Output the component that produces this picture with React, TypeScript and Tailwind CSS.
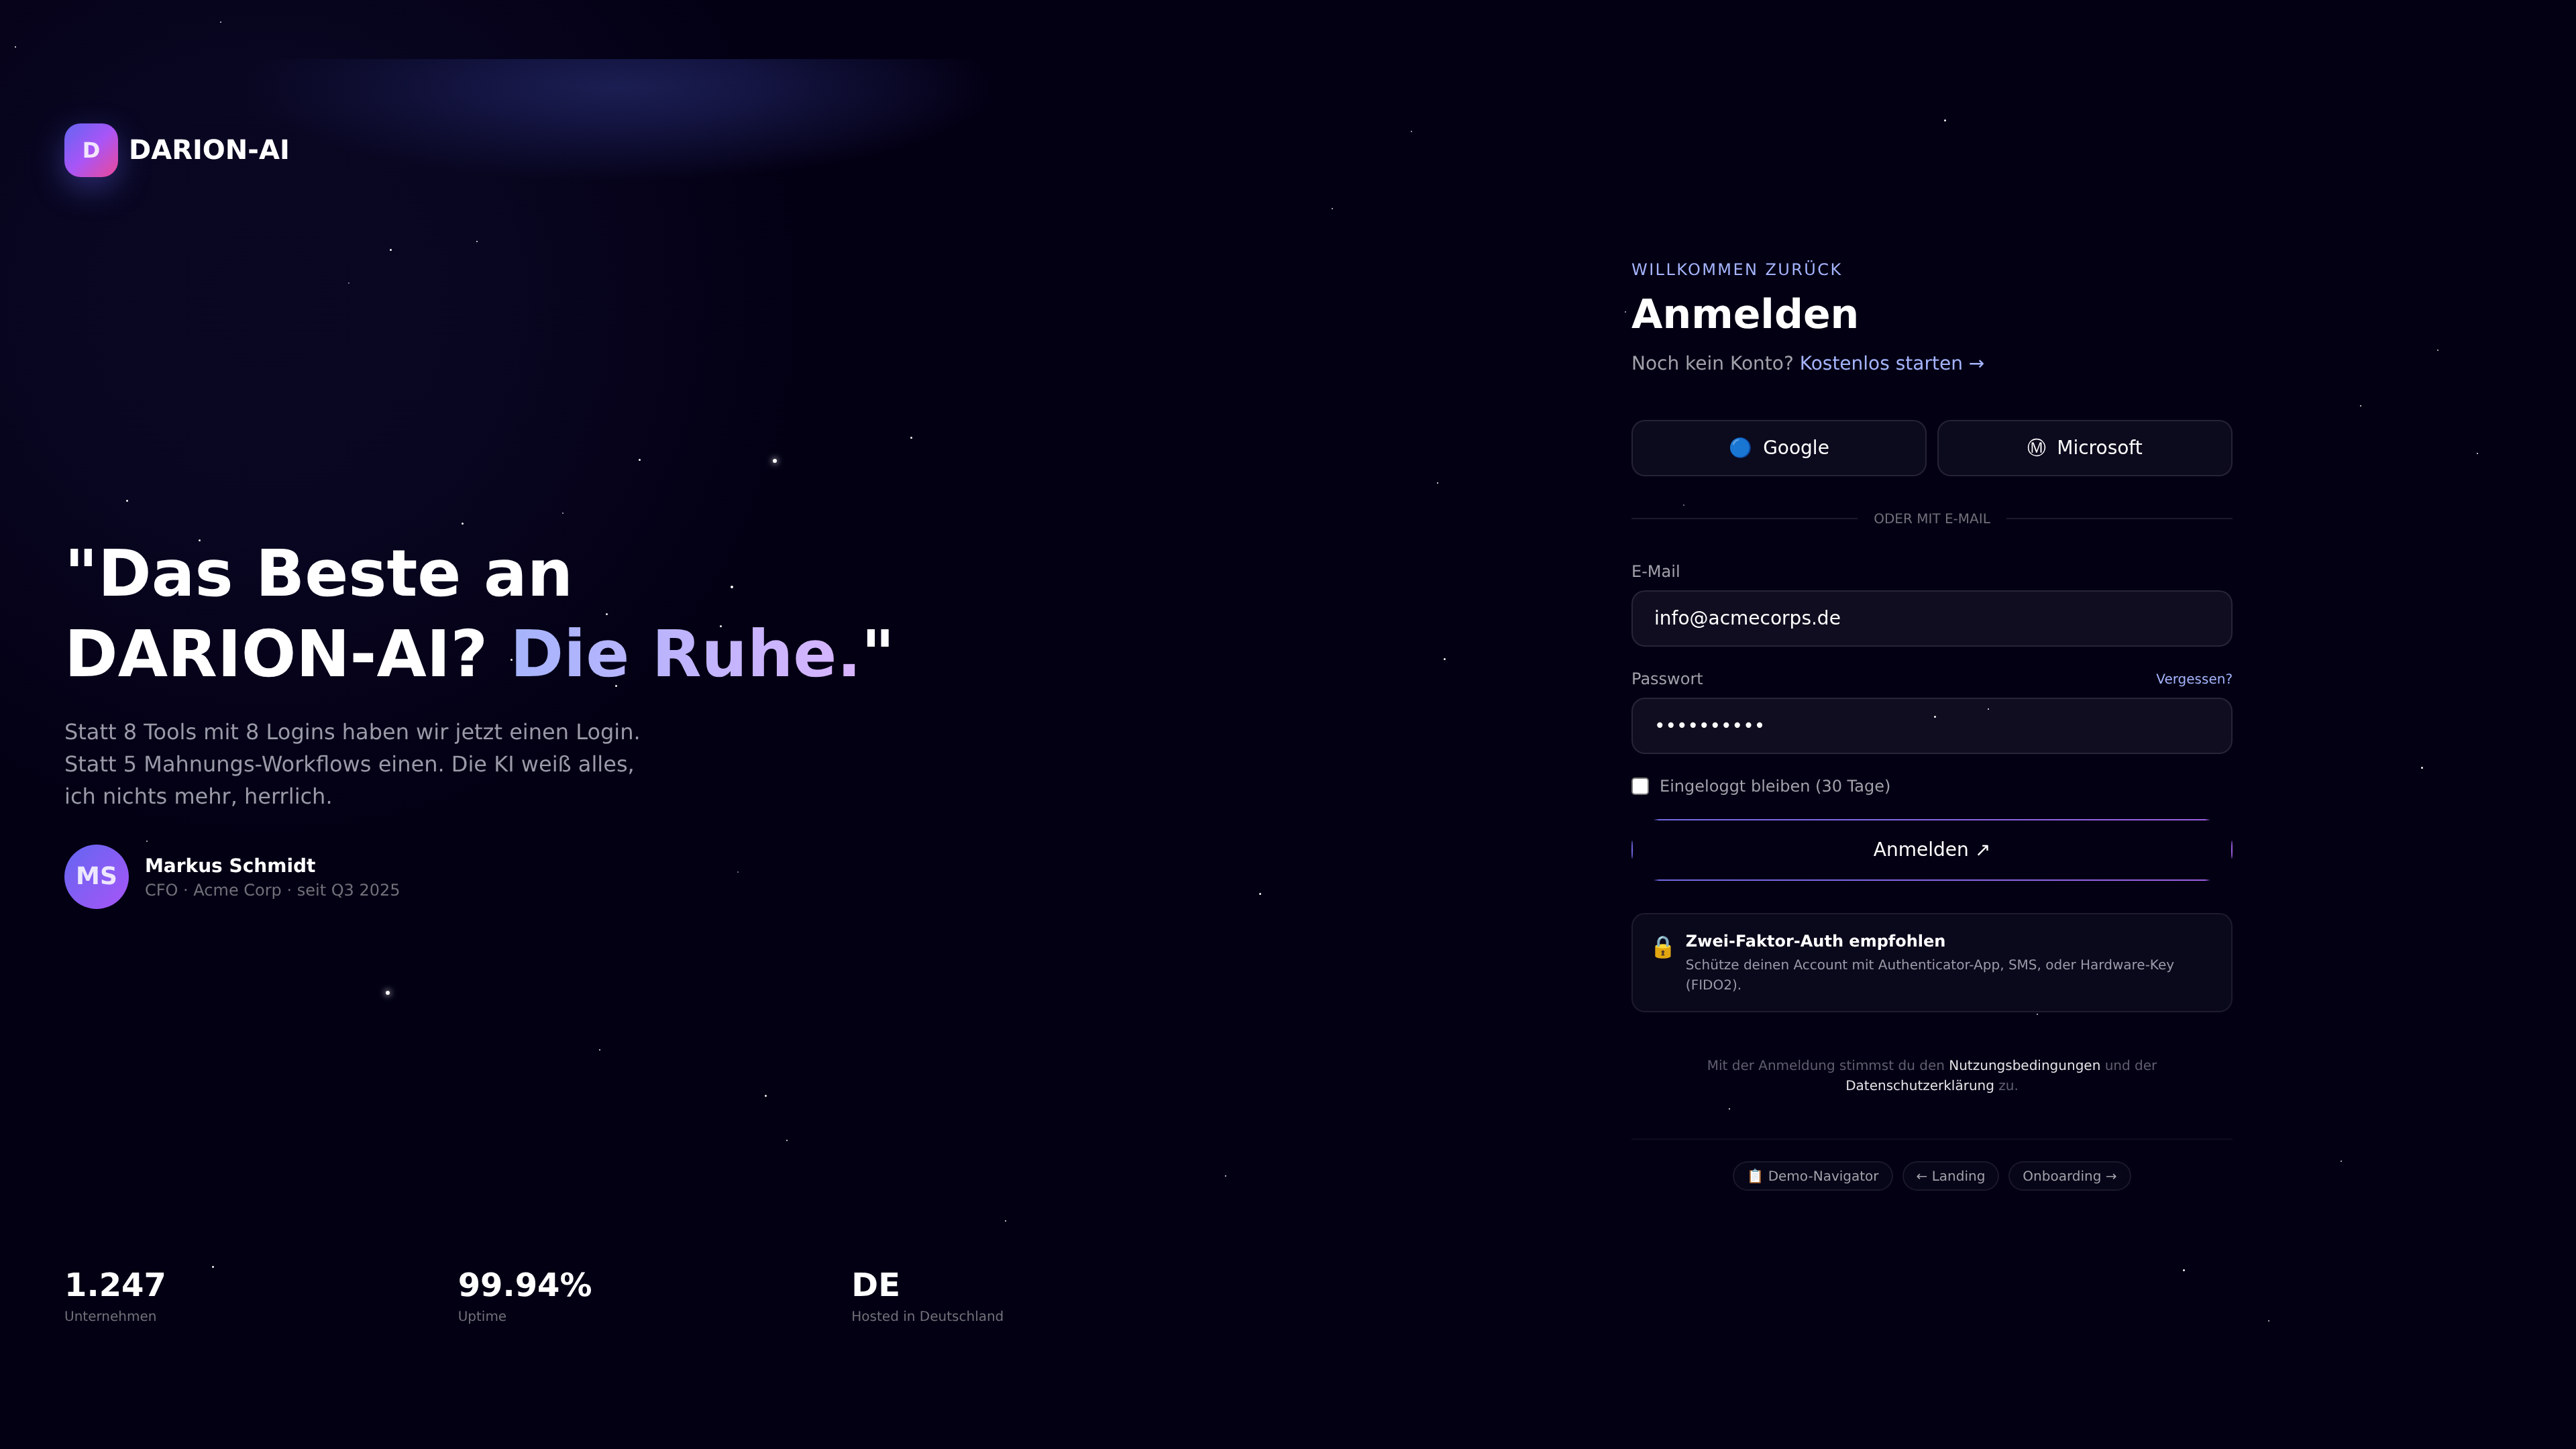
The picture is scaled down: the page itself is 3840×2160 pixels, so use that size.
const stars: [number, number, number, number][] = [
  [23, 70, 2, 0.9], [329, 33, 2, 0.6], [582, 372, 3, 0.9], [711, 360, 2, 0.7], [520, 422, 2, 0.35],
  [1358, 652, 3, 0.8], [1155, 687, 6, 1], [953, 685, 3, 0.9], [189, 746, 3, 0.8], [689, 780, 3, 0.9],
  [839, 765, 2, 0.5], [297, 805, 3, 0.7], [1091, 875, 4, 0.9], [904, 915, 3, 0.7], [1074, 933, 3, 0.8],
  [762, 983, 3, 0.8], [918, 1022, 3, 0.9], [219, 1254, 2, 0.6], [1100, 1300, 2, 0.3], [2423, 465, 2, 0.5],
  [2510, 753, 2, 0.3], [2884, 1068, 3, 0.9], [2964, 1057, 2, 0.8], [3037, 1512, 2, 0.6], [2578, 1653, 2, 0.8],
  [317, 1888, 3, 0.9], [578, 1480, 6, 1], [894, 1565, 2, 0.7], [1141, 1633, 3, 0.9], [1173, 1700, 2, 0.7],
  [1827, 1753, 2, 0.7], [1499, 1820, 2, 0.7], [1878, 1332, 3, 0.9], [2153, 982, 3, 0.9], [2143, 720, 2, 0.8],
  [1986, 311, 2, 0.6], [2104, 196, 2, 0.5], [2899, 179, 3, 1], [3634, 522, 2, 0.6], [3519, 605, 2, 0.7],
  [3693, 676, 2, 0.7], [3610, 1144, 3, 0.9], [3255, 1893, 3, 0.8], [3382, 1969, 2, 0.6], [3490, 1731, 2, 0.6],
];

function Stat({ value, label }: { value: string; label: string }) {
  return (
    <div>
      <div className="text-[48px] leading-[60px] font-bold text-white">{value}</div>
      <div className="mt-[1px] text-[20px] leading-[30px] text-[#71717a]">{label}</div>
    </div>
  );
}

function Pill({ children }: { children: React.ReactNode }) {
  return (
    <a className="flex h-[44px] items-center rounded-full border-2 border-white/[0.08] bg-white/[0.02] px-[19px] text-[20px] text-[#a1a1aa]">
      {children}
    </a>
  );
}

export default function App() {
  return (
    <div className="relative grid h-[2160px] w-[3840px] grid-cols-2 overflow-hidden bg-[#030014] font-['DejaVu_Sans',sans-serif] [text-rendering:geometricPrecision]">
      <div className="pointer-events-none absolute left-0 top-0 h-[1300px] w-[1300px] bg-[radial-gradient(circle_800px_at_400px_450px,#090722_0%,#080620_45%,#030014_100%)]" />
      <div className="pointer-events-none absolute left-[320px] top-[88px] h-[220px] w-[1200px] bg-[radial-gradient(ellipse_560px_140px_at_50%_42px,#1b1e52_0%,#131440_40%,transparent_100%)]" />
      {stars.map(([x, y, s, o], i) => (
        <span
          key={i}
          className="absolute rounded-full bg-white"
          style={{ left: x - s / 2, top: y - s / 2, width: s, height: s, opacity: Math.min(1, o + 0.25), boxShadow: s > 4 ? "0 0 8px 2px rgba(255,255,255,.5)" : undefined }}
        />
      ))}

      <section className="relative flex flex-col justify-between pb-[183px] pl-[96px] pr-[96px] pt-[184px] will-change-transform">
        <div className="flex items-center gap-[16px]">
          <div className="flex h-[80px] w-[80px] items-center justify-center rounded-[24px] bg-[linear-gradient(135deg,#6366f1,#a855f7,#ec4899)] text-[32px] font-bold text-white/85 shadow-[0_16px_48px_rgba(99,102,241,0.4)]">
            D
          </div>
          <div className="text-[40px] font-bold text-white">DARION-AI</div>
        </div>

        <div>
          <h1 className="text-[96px] leading-[120px] font-bold text-white">
            "Das Beste an
            <br />
            DARION-AI?{" "}
            <span className="bg-[linear-gradient(90deg,#a5b4fc,#d8b4fe)] bg-clip-text text-transparent">Die Ruhe.</span>"
          </h1>
          <p className="mt-[32px] text-[32px] leading-[48px] text-[#9a9aa8]">
            Statt 8 Tools mit 8 Logins haben wir jetzt einen Login.
            <br />
            Statt 5 Mahnungs-Workflows einen. Die KI weiß alles,
            <br />
            ich nichts mehr, herrlich.
          </p>
          <div className="mt-[48px] flex items-center gap-[24px]">
            <div className="flex h-[96px] w-[96px] items-center justify-center rounded-full bg-[linear-gradient(135deg,#6366f1,#a855f7)] text-[36px] font-bold text-white/85">
              MS
            </div>
            <div className="pt-[3px]">
              <div className="text-[28px] leading-[36px] font-bold text-white">Markus Schmidt</div>
              <div className="text-[24px] leading-[36px] text-[#71717a]">CFO · Acme Corp · seit Q3 2025</div>
            </div>
          </div>
        </div>

        <div className="grid grid-cols-3 gap-[32px]">
          <Stat value="1.247" label="Unternehmen" />
          <Stat value="99.94%" label="Uptime" />
          <Stat value="DE" label="Hosted in Deutschland" />
        </div>
      </section>

      <section className="relative flex items-center justify-center will-change-transform">
        <div className="w-[896px]">
          <div className="text-[24px] leading-[32px] tracking-[0.1em] text-[#a5b4fc]">WILLKOMMEN ZURÜCK</div>
          <h2 className="mt-[15px] text-[60px] leading-[72px] font-bold text-white">Anmelden</h2>
          <p className="mt-[16px] text-[28px] leading-[42px] text-[#a1a1aa]">
            Noch kein Konto? <a className="text-[#a5b4fc]">Kostenlos starten →</a>
          </p>

          <div className="mt-[63px] grid grid-cols-2 gap-[16px]">
            <button className="flex h-[84px] items-center justify-center gap-[16px] rounded-[20px] border-2 border-white/10 bg-white/[0.04] text-[28px] text-white">
              <span>🔵</span> Google
            </button>
            <button className="flex h-[84px] items-center justify-center gap-[16px] rounded-[20px] border-2 border-white/10 bg-white/[0.04] text-[28px] text-white">
              <span>Ⓜ</span> Microsoft
            </button>
          </div>

          <div className="mt-[48px] flex items-center gap-[24px]">
            <div className="h-[2px] flex-1 bg-white/10" />
            <span className="text-[20px] leading-[30px] text-[#71717a]">ODER MIT E-MAIL</span>
            <div className="h-[2px] flex-1 bg-white/10" />
          </div>

          <label className="mt-[46px] block text-[24px] leading-[36px] text-[#a1a1aa]">E-Mail</label>
          <input
            readOnly
            value="info@acmecorps.de"
            className="mt-[10px] block h-[84px] w-full rounded-[20px] border-2 border-white/10 bg-white/[0.05] px-[32px] text-[28px] text-white outline-none"
          />

          <div className="mt-[30px] flex items-center justify-between">
            <label className="text-[24px] leading-[36px] text-[#a1a1aa]">Passwort</label>
            <a className="text-[20px] text-[#a5b4fc]">Vergessen?</a>
          </div>
          <input
            readOnly
            type="password"
            value="demodemo12"
            className="mt-[10px] block h-[84px] w-full rounded-[20px] border-2 border-white/10 bg-white/[0.05] px-[32px] text-[28px] text-white outline-none"
          />

          <label className="mt-[30px] flex items-center gap-[16px] text-[24px] leading-[36px] text-[#a1a1aa]">
            <input type="checkbox" className="h-[26px] w-[26px] appearance-none rounded-[5px] border-2 border-[#767676] bg-white" />
            Eingeloggt bleiben (30 Tage)
          </label>

          <button className="relative mt-[31px] flex h-[92px] w-full items-center justify-center text-[28px] text-white">
            <span className="absolute left-[33px] right-[33px] top-0 h-[2px] bg-[linear-gradient(90deg,#7169e6,#9d60e4)] [mask-image:linear-gradient(90deg,transparent,black_8px,black_calc(100%-8px),transparent)]" />
            <span className="absolute bottom-0 left-[33px] right-[33px] h-[2px] bg-[linear-gradient(90deg,#7169e6,#9d60e4)] [mask-image:linear-gradient(90deg,transparent,black_8px,black_calc(100%-8px),transparent)]" />
            <span className="absolute left-0 top-[32px] h-[27px] w-[2px] rounded-[50%] bg-[#7169e6]" />
            <span className="absolute right-0 top-[32px] h-[27px] w-[2px] rounded-[50%] bg-[#9d60e4]" />
            Anmelden ↗
          </button>

          <div className="mt-[48px] flex gap-[14px] rounded-[20px] border-2 border-white/[0.08] bg-white/[0.03] pb-[24px] pl-[30px] pr-[30px] pt-[22px]">
            <span className="ml-[-5px] mt-[6px] text-[32px] leading-[40px]">🔒</span>
            <div>
              <div className="text-[24px] leading-[36px] font-bold text-white">Zwei-Faktor-Auth empfohlen</div>
              <div className="mt-[2px] text-[20px] leading-[30px] text-[#9a9aa8]">
                Schütze deinen Account mit Authenticator-App, SMS, oder Hardware-Key (FIDO2).
              </div>
            </div>
          </div>

          <p className="mt-[64px] text-center text-[20px] leading-[30px] text-[#5f5f6e]">
            Mit der Anmeldung stimmst du den <a className="text-[#e4e4e7]">Nutzungsbedingungen</a> und der
            <br />
            <a className="text-[#e4e4e7]">Datenschutzerklärung</a> zu.
          </p>

          <div className="mt-[64px] flex justify-center gap-[14px] border-t-2 border-white/[0.05] pt-[32px]">
            <Pill>📋 Demo-Navigator</Pill>
            <Pill>← Landing</Pill>
            <Pill>Onboarding →</Pill>
          </div>
        </div>
      </section>
    </div>
  );
}
